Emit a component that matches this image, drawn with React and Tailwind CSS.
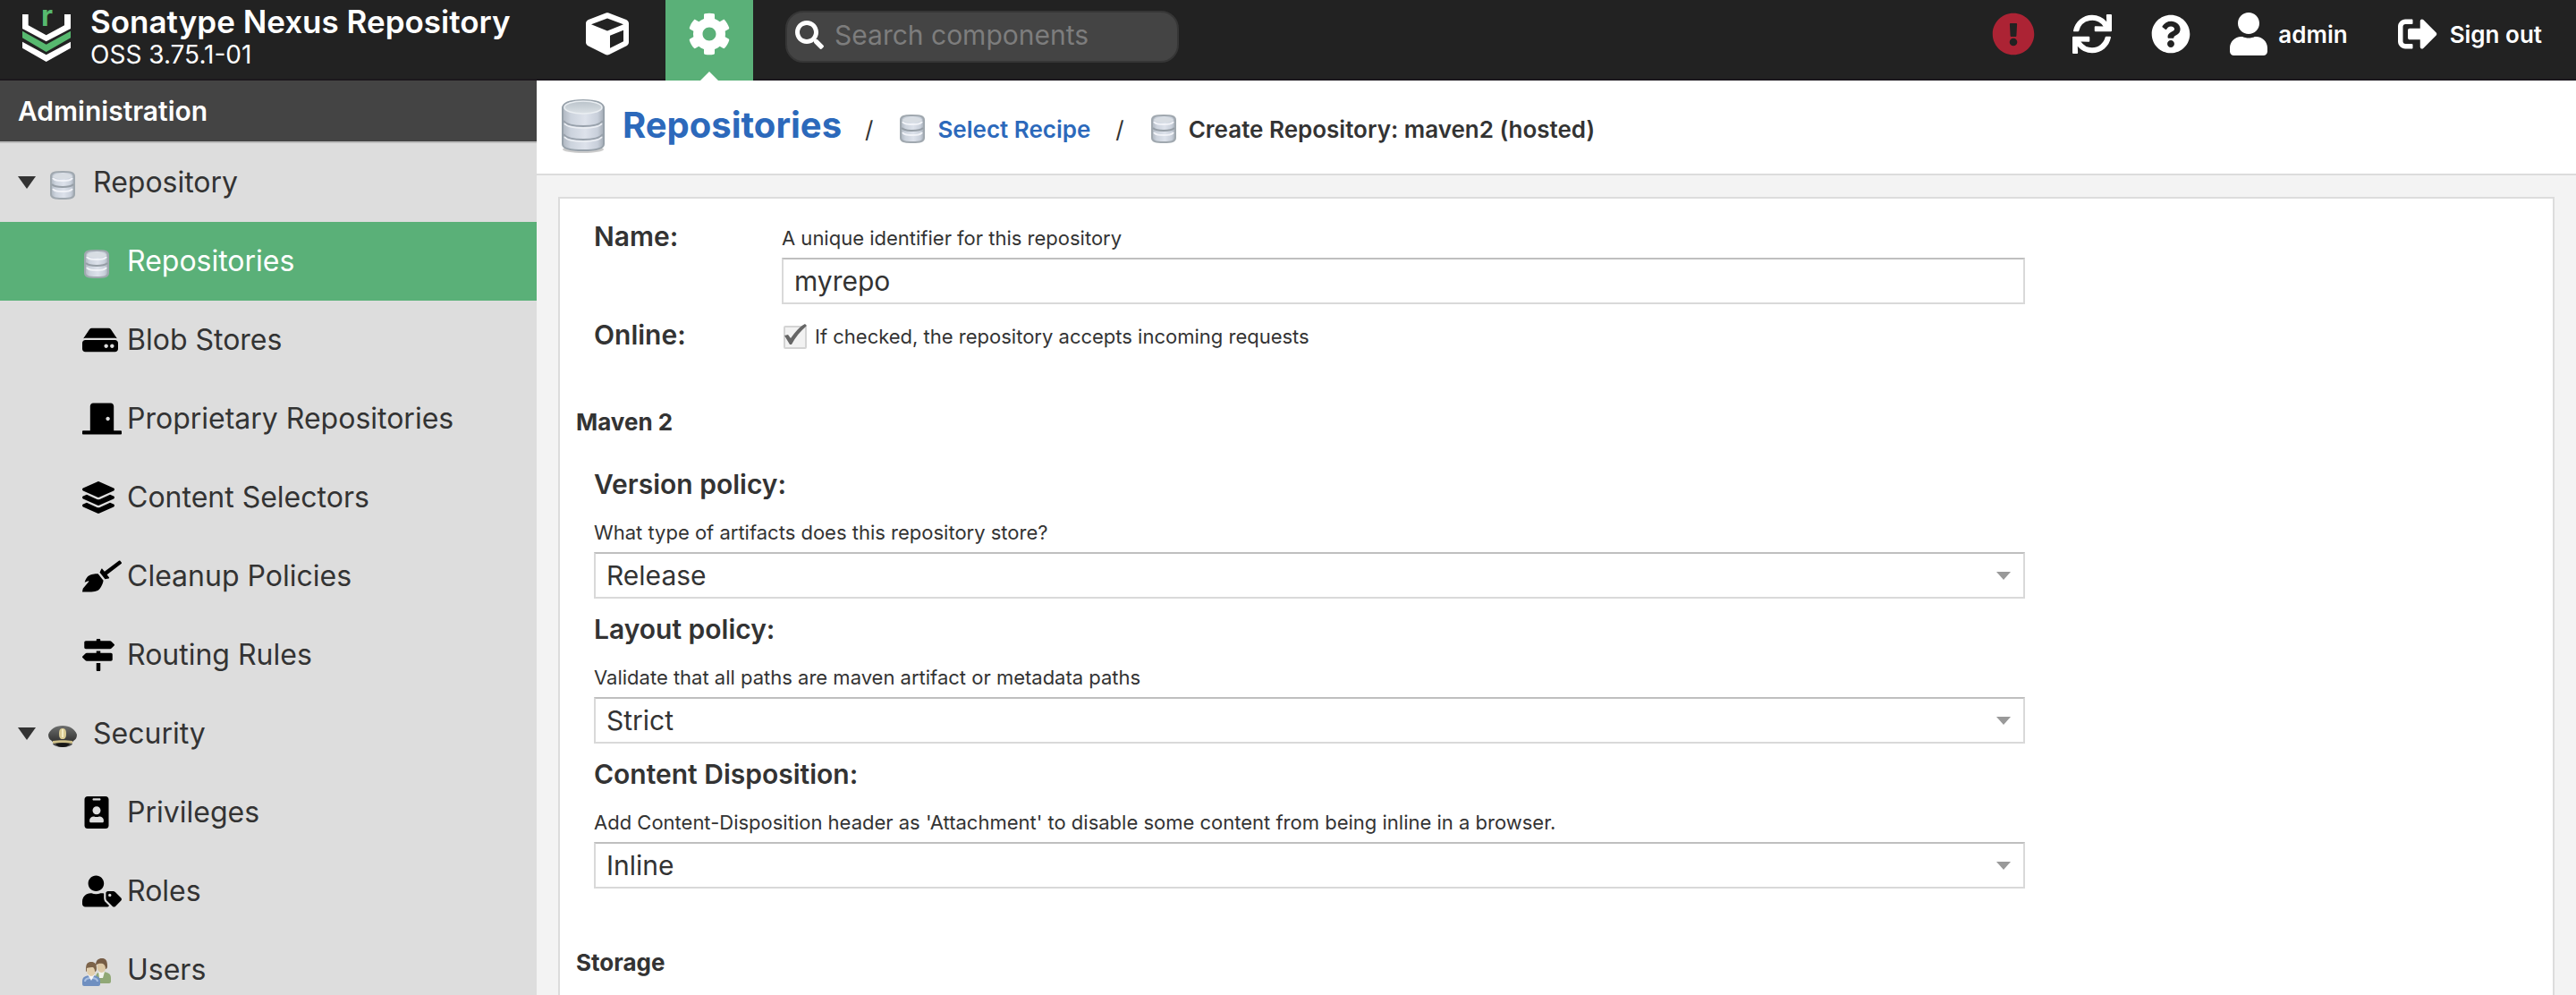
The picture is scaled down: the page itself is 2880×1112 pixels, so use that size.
import React from "react";
import {
  FaCube,
  FaCog,
  FaSearch,
  FaExclamationCircle,
  FaSync,
  FaQuestionCircle,
  FaUser,
  FaSignOutAlt,
  FaHdd,
  FaDoorClosed,
  FaLayerGroup,
  FaBroom,
  FaMapSigns,
  FaIdBadge,
  FaUserTag,
} from "react-icons/fa";

function Logo() {
  return (
    <svg viewBox="75 36 162 180" className="h-15 w-[54px] shrink-0 overflow-visible" aria-hidden="true">
      <path fill="#fff" d="M75 54h20v37l60 33 61-33V54h21v48l-82 43-80-43z" />
      <path fill="#57b96f" d="M75 110l80 45 82-45v23l-82 47-80-47z" />
      <path fill="#fff" d="M75 146l80 44 82-44v21l-82 46-80-46z" />
      <text x="138" y="94" fontFamily="Inter, sans-serif" fontWeight="700" fontSize="96" fill="#57b96f">
        r
      </text>
    </svg>
  );
}

/* Shared gradients for the metallic database icons. */
function IconDefs() {
  return (
    <svg className="absolute h-0 w-0" aria-hidden="true">
      <defs>
        <linearGradient id="metal" x1="0" x2="1" y1="0" y2="0">
          <stop offset="0" stopColor="#aeb6c0" />
          <stop offset="0.2" stopColor="#ccd3dd" />
          <stop offset="0.55" stopColor="#dde2eb" />
          <stop offset="0.85" stopColor="#c8cfda" />
          <stop offset="1" stopColor="#a4acb6" />
        </linearGradient>
        <linearGradient id="lid" x1="0" x2="0" y1="0" y2="1">
          <stop offset="0" stopColor="#bac3ca" />
          <stop offset="1" stopColor="#dbe1e6" />
        </linearGradient>
        <linearGradient id="cap" x1="0" x2="0" y1="0" y2="1">
          <stop offset="0" stopColor="#6d6f6e" />
          <stop offset="1" stopColor="#2c2c2b" />
        </linearGradient>
      </defs>
    </svg>
  );
}

function LargeDatabase() {
  return (
    <svg viewBox="0 0 52 64" className="h-16 w-[52px] shrink-0" aria-hidden="true">
      <ellipse cx="26" cy="59" rx="23" ry="4" fill="#000" opacity="0.2" />
      <path
        d="M3 13C3 7 12 4 26 4s23 3 23 9v40c0 5-10 7-23 7S3 58 3 53z"
        fill="url(#metal)"
        stroke="#97a1aa"
        strokeWidth="2"
      />
      <ellipse cx="26" cy="12" rx="21" ry="7" fill="url(#lid)" stroke="#eaeef2" strokeWidth="1.5" />
      <path d="M4 27c3 4 12 6 22 6s19-2 22-6M4 42c3 4 12 6 22 6s19-2 22-6" fill="none" stroke="#98a1ab" strokeWidth="2" />
      <path d="M5 30c3 4 11 5 21 5s18-1 21-5M5 45c3 4 11 5 21 5s18-1 21-5" fill="none" stroke="#eceff4" strokeWidth="1.5" />
    </svg>
  );
}

function SmallDatabase() {
  return (
    <svg viewBox="0 0 32 32" className="h-8 w-8 shrink-0" aria-hidden="true">
      <path
        d="M3 6c0-4 4-5 13-5s13 1 13 5v20c0 4-4 5-13 5S3 30 3 26z"
        fill="url(#metal)"
        stroke="#a0a8af"
        strokeWidth="2"
      />
      <ellipse cx="16" cy="6" rx="11" ry="3" fill="#d8dde3" />
      <path d="M5 8c2 3 6 3 11 3s9 0 11-3M5 20c2 3 6 3 11 3s9 0 11-3" fill="none" stroke="#f1f3f8" strokeWidth="2" />
      <path d="M4 15c2 2 6 3 12 3s10-1 12-3" fill="none" stroke="#969ea6" strokeWidth="2" />
    </svg>
  );
}

function PoliceCap() {
  return (
    <svg viewBox="0 0 32 32" className="h-8 w-8" aria-hidden="true">
      <ellipse cx="16" cy="24" rx="11" ry="4" fill="#1e1e1e" opacity="0.75" />
      <path d="M0 14C2 8 8 4 16 4S30 8 32 14c0 4-2 6-4 7l-2 3H6l-2-3c-2-1-4-3-4-7z" fill="url(#cap)" />
      <path d="M5 21c6-1 16-1 22 0v3c-6-1-16-1-22 0z" fill="#cfc08a" />
      <path d="M8 24c5-1 11-1 16 0-2 3-5 4-8 4s-6-1-8-4z" fill="#161616" />
      <path d="M16 7c3 0 4 2 4 6s-1 6-4 6-4-2-4-6 1-6 4-6z" fill="#d9cb93" />
      <path d="M16 8v9" stroke="#f3ecc4" strokeWidth="2" />
    </svg>
  );
}

function UsersPicture() {
  return (
    <svg viewBox="0 0 32 32" className="h-8 w-8" aria-hidden="true">
      <path d="M15 21c0-4 3-6 7-6 6 0 10 2 10 7v4c0 1-1 2-2 2H17z" fill="#91a876" />
      <path d="M18 15h7l-2 7h-4z" fill="#f2f2ec" />
      <ellipse cx="21.5" cy="9" rx="5" ry="7" fill="#dcc8a6" />
      <path d="M15 8C15 2 18 0 22 0s6 2 6 9c0 2-1 3-2 3 0-3-1-5-3-6-2 0-5-1-8 2z" fill="#765c45" />
      <path d="M0 26c0-5 3-7 10-7s10 2 10 7v3c0 1-1 2-2 2H2c-1 0-2-1-2-2z" fill="#6f8fc0" />
      <path d="M3 26c0-3 3-4 7-4s7 1 7 4" fill="none" stroke="#a9c0e2" strokeWidth="2" />
      <path d="M6 18h8l-4 7z" fill="#f5f6f8" />
      <ellipse cx="10" cy="13" rx="5" ry="7" fill="#e2cfae" />
      <path d="M4 12C4 6 6 4 10 4s6 2 6 8c0 2-1 3-2 3 0-3-1-4-2-5-2 0-5 0-7 1v4c-1 0-1-1-1-3z" fill="#7d644a" />
    </svg>
  );
}

const picture = (node) => <span className="block pt-1.5">{node}</span>;

const groups = [
  {
    name: "Repository",
    icon: <SmallDatabase />,
    items: [
      { name: "Repositories", icon: picture(<SmallDatabase />), active: true },
      { name: "Blob Stores", icon: <FaHdd className="h-9 w-10" /> },
      { name: "Proprietary Repositories", icon: <FaDoorClosed className="h-9 w-11" /> },
      { name: "Content Selectors", icon: <FaLayerGroup className="h-9 w-9" /> },
      { name: "Cleanup Policies", icon: <FaBroom className="h-9 w-11" /> },
      { name: "Routing Rules", icon: <FaMapSigns className="h-9 w-9" /> },
    ],
  },
  {
    name: "Security",
    icon: <PoliceCap />,
    items: [
      { name: "Privileges", icon: <FaIdBadge className="h-9 w-8" /> },
      { name: "Roles", icon: <FaUserTag className="h-9 w-11" /> },
      { name: "Users", icon: picture(<UsersPicture />) },
    ],
  },
];

const policies = [
  {
    id: "version",
    label: "Version policy:",
    help: "What type of artifacts does this repository store?",
    options: ["Release", "Snapshot", "Mixed"],
  },
  {
    id: "layout",
    label: "Layout policy:",
    help: "Validate that all paths are maven artifact or metadata paths",
    options: ["Strict", "Permissive"],
  },
  {
    id: "disposition",
    label: "Content Disposition:",
    help: "Add Content-Disposition header as 'Attachment' to disable some content from being inline in a browser.",
    options: ["Inline", "Attachment"],
  },
];

function Header() {
  return (
    <header className="flex h-[90px] shrink-0 items-start bg-[#222222] text-white shadow-[inset_0_-2px_0_#1c181d]">
      <div className="flex w-[630px] shrink-0 gap-[22px] pt-0.5 pl-[25px]">
        <div className="pt-2">
          <Logo />
        </div>
        <div>
          <div className="text-[35px] leading-[44px] font-semibold whitespace-nowrap">Sonatype Nexus Repository</div>
          <div className="text-[28px] leading-[30px]">OSS 3.75.1-01</div>
        </div>
      </div>
      <button type="button" aria-label="Browse" className="flex h-[76px] w-[98px] items-center justify-center">
        <FaCube className="size-12" />
      </button>
      <button
        type="button"
        aria-label="Administration"
        className="relative ml-4 flex h-[90px] w-[98px] items-center justify-center bg-[#5ab078] pb-3.5"
      >
        <FaCog className="size-12" />
        <svg viewBox="0 0 20 10" className="absolute bottom-0 left-[39px] h-2.5 w-5" aria-hidden="true">
          <path d="M0 10L10 0l10 10z" fill="#fff" />
        </svg>
      </button>
      <label className="mt-3 ml-9 flex h-[58px] w-[440px] items-center gap-3 rounded-[20px] border-2 border-[#363636] bg-[#444444] pr-4 pb-1 pl-[9px]">
        <FaSearch className="size-8 shrink-0" />
        <input
          type="search"
          aria-label="Search components"
          placeholder="Search components"
          className="w-full min-w-0 bg-transparent text-[30px] text-white outline-none placeholder:text-[#7d7d7d]"
        />
      </label>
      <div className="ml-auto flex h-[76px] items-center pr-[38px] text-[26px] font-semibold">
        <button type="button" aria-label="System status" className="text-[#ac2334]">
          <FaExclamationCircle className="size-12" />
        </button>
        <button type="button" aria-label="Refresh" className="ml-[42px]">
          <FaSync className="size-11" />
        </button>
        <button type="button" aria-label="Help" className="ml-[44px]">
          <FaQuestionCircle className="size-11" />
        </button>
        <button type="button" className="ml-[44px] flex items-center gap-3">
          <FaUser className="h-12 w-[42px]" />
          admin
        </button>
        <button type="button" className="ml-14 flex items-center gap-3.5 whitespace-nowrap">
          <FaSignOutAlt className="size-11" />
          Sign out
        </button>
      </div>
    </header>
  );
}

function Sidebar() {
  return (
    <aside className="w-[600px] shrink-0 overflow-hidden bg-[#dddddd] text-[32px]">
      <h2 className="flex h-[70px] items-center border-b-2 border-[#bdbdbd] bg-[#444444] pl-5 text-[30px] font-semibold text-white">
        Administration
      </h2>
      <nav aria-label="Administration">
        {groups.map((group) => (
          <div key={group.name}>
            <button type="button" aria-expanded="true" className="flex h-22 w-full items-center pl-5">
              <svg viewBox="0 0 20 14" className="h-3.5 w-5" aria-hidden="true">
                <path d="M0 0h20L10 14z" fill="#333" />
              </svg>
              <span className="ml-3.5 w-[50px] pt-1.5">{group.icon}</span>
              <span>{group.name}</span>
            </button>
            {group.items.map((item) => (
              <a
                key={item.name}
                href="#"
                className={
                  item.active
                    ? "flex h-22 items-center bg-[#5ab078] pl-[92px] text-white"
                    : "flex h-22 items-center pl-[92px]"
                }
              >
                <span className="w-[50px] shrink-0 text-black">{item.icon}</span>
                <span>{item.name}</span>
              </a>
            ))}
          </div>
        ))}
      </nav>
    </aside>
  );
}

function Breadcrumb() {
  return (
    <nav
      aria-label="Breadcrumb"
      className="flex h-[106px] shrink-0 items-center border-b-2 border-[#dcdcdc] bg-white pb-1 pl-[26px] text-[26px] font-semibold whitespace-nowrap"
    >
      <LargeDatabase />
      <a href="#" className="ml-[18px] text-[40px] font-bold text-[#2c69bb]">
        Repositories
      </a>
      <span className="ml-[26px] pt-2 font-normal">/</span>
      <a href="#" className="ml-7 flex items-center gap-3 pt-2 text-[#2c69bb]">
        <SmallDatabase />
        Select Recipe
      </a>
      <span className="ml-7 pt-2 font-normal">/</span>
      <span className="ml-7 flex items-center gap-3 pt-2" aria-current="page">
        <SmallDatabase />
        Create Repository: maven2 (hosted)
      </span>
    </nav>
  );
}

const boxClass =
  "h-13 w-full appearance-none rounded-none border-2 border-[#d9d9d9] border-t-[#bfbfbf] bg-white px-3 text-[30px] outline-none";

function PolicyField({ id, label, help, options }) {
  return (
    <div>
      <label htmlFor={id} className="block text-[30px] leading-9 font-semibold">
        {label}
      </label>
      <p id={`${id}-help`} className="mt-[18px] mb-1 text-[22px] leading-9">
        {help}
      </p>
      <div className="relative">
        <select id={id} aria-describedby={`${id}-help`} defaultValue={options[0]} className={boxClass}>
          {options.map((option) => (
            <option key={option}>{option}</option>
          ))}
        </select>
        <svg viewBox="0 0 16 9" className="pointer-events-none absolute top-[22px] right-4 h-[9px] w-4" aria-hidden="true">
          <path d="M0 0h16L8 9z" fill="#999" />
        </svg>
      </div>
    </div>
  );
}

function RepositoryForm() {
  return (
    <form className="mx-6 mt-6 flex-1 overflow-hidden border-2 border-b-0 border-[#dcdcdc] bg-white px-[18px] pt-6">
      <div className="grid max-w-[1620px] grid-cols-[210px_1fr] gap-y-4 pl-5">
        <label htmlFor="name" className="text-[30px] leading-9 font-semibold">
          Name:
        </label>
        <div>
          <p id="name-help" className="mb-1 pt-0.5 text-[22px] leading-9">
            A unique identifier for this repository
          </p>
          <input id="name" type="text" defaultValue="myrepo" aria-describedby="name-help" className={boxClass} />
        </div>
        <label htmlFor="online" className="text-[30px] leading-9 font-semibold">
          Online:
        </label>
        <div className="flex h-10 items-center gap-[9px]">
          <span className="relative flex size-7 shrink-0 items-center">
            <input
              id="online"
              type="checkbox"
              defaultChecked
              aria-describedby="online-help"
              className="peer mt-0.5 ml-0.5 size-[26px] appearance-none rounded-xs border-2 border-[#d4d4d4] bg-[#f2f2f2]"
            />
            <svg
              viewBox="0 0 28 28"
              className="pointer-events-none absolute inset-0 hidden size-7 peer-checked:block"
              aria-hidden="true"
            >
              <path d="M3 13l4-1 3 4C15 9 20 3 26 0l2 2C21 8 15 15 11 23H9z" fill="#666" />
            </svg>
          </span>
          <label htmlFor="online" id="online-help" className="text-[22px]">
            If checked, the repository accepts incoming requests
          </label>
        </div>
      </div>
      <h3 className="mt-[58px] text-[26px] leading-9 font-bold">Maven 2</h3>
      <div className="mt-[33px] flex max-w-[1620px] flex-col gap-4 pl-5">
        {policies.map((policy) => (
          <PolicyField key={policy.id} {...policy} />
        ))}
      </div>
      <h3 className="mt-[65px] text-[26px] leading-9 font-bold">Storage</h3>
    </form>
  );
}

export default function App() {
  return (
    <div className="flex h-screen flex-col overflow-hidden bg-[#f3f3f3] font-['Inter',sans-serif] text-[#333333]">
      <IconDefs />
      <Header />
      <div className="flex min-h-0 flex-1">
        <Sidebar />
        <main className="flex min-w-0 flex-1 flex-col">
          <Breadcrumb />
          <RepositoryForm />
        </main>
      </div>
    </div>
  );
}
